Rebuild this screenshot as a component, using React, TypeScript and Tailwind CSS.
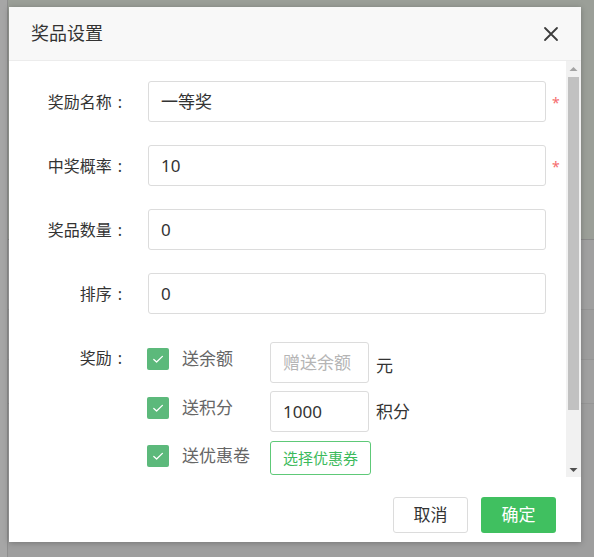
import React from "react";

const font = { fontFamily: '"Noto Sans", "Noto Sans CJK SC", sans-serif' };

function Label({ text }: { text: string }) {
  return (
    <div className="w-[114px] shrink-0 flex justify-end items-center text-[16px] text-[#333] leading-[22px]">
      <span>{text}</span>
      <span className="ml-[6px] mr-[1px]">:</span>
    </div>
  );
}

function Field({ label, value, required }: { label: string; value: string; required?: boolean }) {
  return (
    <div className="flex items-center h-[41px] mb-[23px]">
      <Label text={label} />
      <div className="ml-[25px] w-[398px] h-[41px] border border-[#dcdcdc] rounded-[3px] flex items-center pl-[12px] text-[17px] text-[#333]">
        {value}
      </div>
      {required ? (
        <span className="ml-[6px] text-[14px] leading-none text-[#f56c6c] mt-[2px]">*</span>
      ) : null}
    </div>
  );
}

function Check() {
  return (
    <div className="w-[22px] h-[22px] rounded-[2px] bg-[#5cb97b] flex items-center justify-center shrink-0">
      <svg width="22" height="22" viewBox="0 0 22 22" fill="none">
        <path d="M6.8 11.4 L9.6 14 L15.4 8.4" stroke="#ffffff" strokeWidth="1.3" strokeLinecap="round" strokeLinejoin="round" />
      </svg>
    </div>
  );
}

function CheckLabel({ text, mt }: { text: string; mt: string }) {
  return (
    <div className={`w-[123px] shrink-0 flex items-center ${mt}`}>
      <Check />
      <span className="ml-[13px] text-[17px] text-[#666] leading-[22px]">{text}</span>
    </div>
  );
}

function ScrollBar() {
  return (
    <div className="w-[15px] shrink-0 bg-[#f1f1f1] flex flex-col">
      <div className="h-[15px] flex items-center justify-center">
        <svg width="9" height="6" viewBox="0 0 9 6">
          <path d="M0.5 5 L4.5 1 L8.5 5 Z" fill="#a3a3a3" />
        </svg>
      </div>
      <div className="flex-1 px-[2px] pt-[1px]">
        <div className="h-[333px] bg-[#c1c1c1]" />
      </div>
      <div className="h-[15px] flex items-center justify-center">
        <svg width="9" height="6" viewBox="0 0 9 6">
          <path d="M0.5 1 L4.5 5 L8.5 1 Z" fill="#505050" />
        </svg>
      </div>
    </div>
  );
}

export default function App() {
  return (
    <div className="relative w-[594px] h-[557px] overflow-hidden bg-[#a0a0a0]" style={font}>
      {/* page behind overlay */}
      <div className="flex h-full">
        <div className="w-[8px] bg-[#a6a6a6] border-r border-[#8e8e8e]" />
        <div className="flex-1 flex flex-col">
          <div className="h-[240px] bg-[#9b9f98] border-b border-[#8a8a8a]" />
          <div className="h-[70px] border-b border-[#959595]" />
          <div className="h-[50px] bg-[#9d9d9d] border-b border-[#959595]" />
          <div className="h-[44px] border-b border-[#959595]" />
          <div className="flex-1 bg-[#9e9e9e]" />
        </div>
      </div>

      {/* dialog */}
      <div className="absolute left-[9px] top-[7px] w-[572px] h-[535px] bg-white flex flex-col shadow-[0_1px_6px_rgba(0,0,0,0.25)]">
        <div className="h-[54px] shrink-0 bg-[#f8f8f8] border-b border-[#ececec] flex items-center justify-between pl-[22px] pr-[22px]">
          <span className="text-[18px] text-[#333]">奖品设置</span>
          <svg width="16" height="16" viewBox="0 0 16 16" className="mt-[1px]">
            <path d="M2 2 L14 14 M14 2 L2 14" stroke="#3c3c3c" strokeWidth="1.8" strokeLinecap="round" />
          </svg>
        </div>

        <div className="h-[416px] shrink-0 flex">
          <div className="flex-1 overflow-hidden">
            <div className="pt-[20px] pb-[68px]">
              <Field label="奖励名称" value="一等奖" required />
              <Field label="中奖概率" value="10" required />
              <Field label="奖品数量" value="0" />
              <Field label="排序" value="0" />

              <div className="flex mt-[28px]">
                <div className="w-[114px] shrink-0 flex justify-end text-[16px] text-[#333] leading-[22px] mt-[5px]">
                  <span>奖励</span>
                  <span className="ml-[6px] mr-[1px]">:</span>
                </div>
                <div className="ml-[24px] flex flex-col">
                  <div className="flex items-start h-[41px]">
                    <CheckLabel text="送余额" mt="mt-[6px]" />
                    <div className="w-[99px] h-[41px] border border-[#dcdcdc] rounded-[3px] flex items-center pl-[12px] text-[17px] text-[#b5b5b5]">
                      赠送余额
                    </div>
                    <span className="ml-[7px] mt-[13px] text-[17px] text-[#333] leading-[22px]">元</span>
                  </div>
                  <div className="flex items-start h-[41px] mt-[8px]">
                    <CheckLabel text="送积分" mt="mt-[6px]" />
                    <div className="w-[99px] h-[41px] border border-[#dcdcdc] rounded-[3px] flex items-center pl-[12px] text-[17px] text-[#333]">
                      1000
                    </div>
                    <span className="ml-[7px] mt-[10px] text-[17px] text-[#333] leading-[22px]">积分</span>
                  </div>
                  <div className="flex items-start h-[34px] mt-[9px]">
                    <CheckLabel text="送优惠卷" mt="mt-[4px]" />
                    <div className="w-[101px] h-[34px] border border-[#5ec978] rounded-[3px] flex items-center justify-center text-[15px] text-[#3cba5c]">
                      选择优惠券
                    </div>
                  </div>
                </div>
              </div>
            </div>
          </div>
          <ScrollBar />
        </div>

        <div className="flex-1 flex justify-end items-start pt-[20px] pr-[25px] gap-[13px]">
          <div className="w-[75px] h-[36px] border border-[#dcdcdc] rounded-[3px] flex items-center justify-center text-[17px] text-[#333]">
            取消
          </div>
          <div className="w-[75px] h-[36px] bg-[#40c060] rounded-[3px] flex items-center justify-center text-[17px] text-white">
            确定
          </div>
        </div>
      </div>
    </div>
  );
}
